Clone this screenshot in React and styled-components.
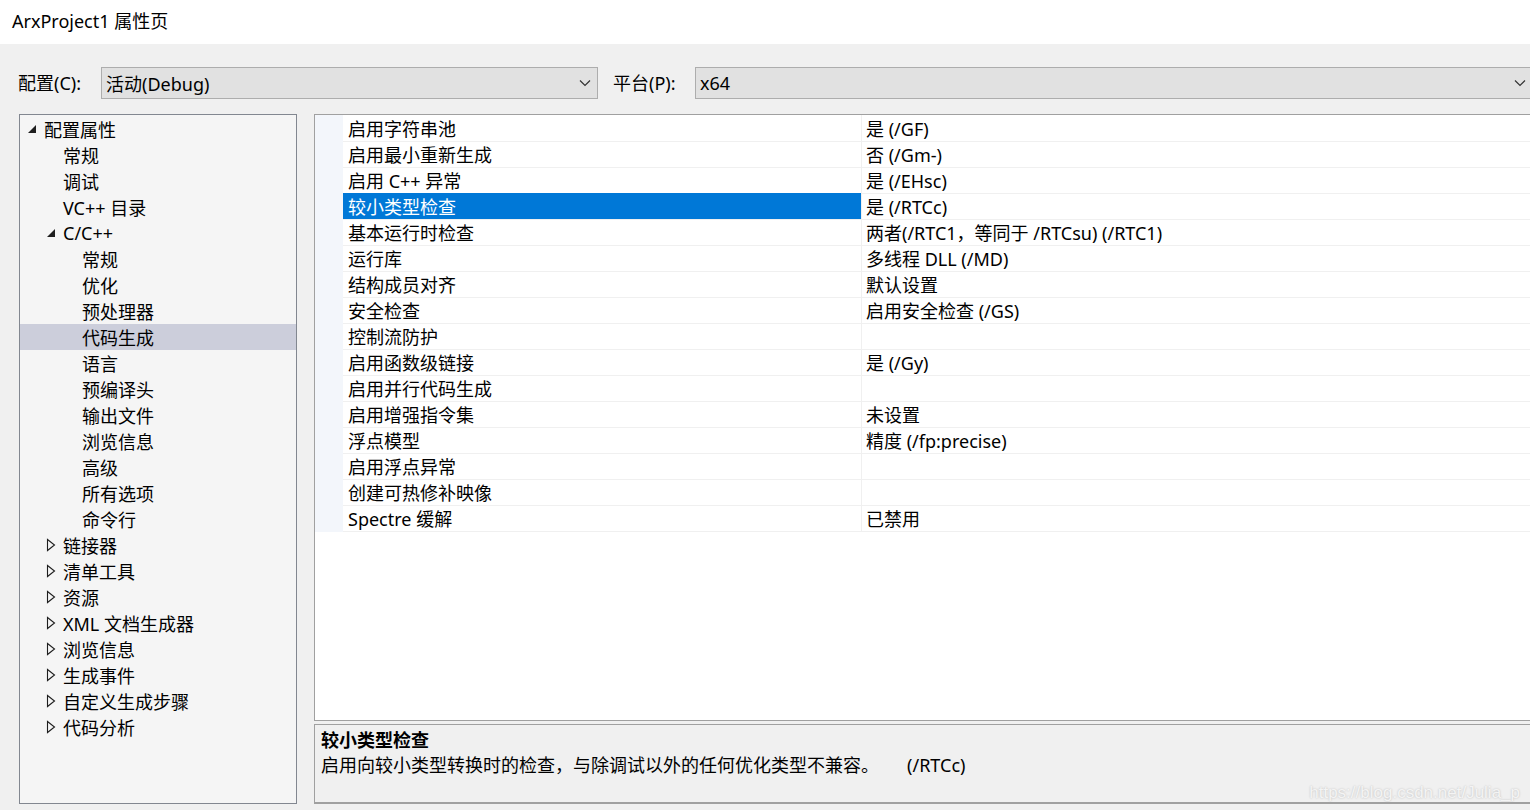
import React from 'react';
import styled, { createGlobalStyle } from 'styled-components';

const Global = createGlobalStyle`
  html, body {
    margin: 0;
    padding: 0;
    width: 1530px;
    height: 810px;
    overflow: hidden;
    background: #f0f0f0;
  }
  body {
    font-family: "Segoe UI", "Noto Sans", "Noto Sans CJK SC", sans-serif;
    font-size: 18px;
    color: #000;
  }
`;

const Window = styled.div`
  width: 1530px;
  height: 810px;
  display: flex;
  flex-direction: column;
  position: relative;
  overflow: hidden;
`;

const TitleBar = styled.div`
  height: 44px;
  background: #fff;
  display: flex;
  align-items: center;
  padding-left: 12px;
  font-size: 18px;
  line-height: 1;
  padding-bottom: 2px;
  box-sizing: border-box;
`;

const Toolbar = styled.div`
  display: flex;
  align-items: center;
  padding: 23px 0 0 18px;
  height: 32px;
`;

const Label = styled.span`
  width: ${p => p.w}px;
  flex: none;
  line-height: 32px;
`;

const Combo = styled.div`
  height: 32px;
  box-sizing: border-box;
  border: 1px solid #adadad;
  background: #e1e1e1;
  display: flex;
  align-items: center;
  padding-left: 4px;
  width: ${p => (p.grow ? 'auto' : `${p.w}px`)};
  flex: ${p => (p.grow ? '1' : 'none')};
  margin-right: ${p => (p.grow ? '-3px' : '15px')};
  span { flex: 1; }
  svg { margin-right: 6px; }
`;

const Main = styled.div`
  flex: 1;
  display: flex;
  gap: 17px;
  padding: 15px 0 6px 19px;
  min-height: 0;
`;

const Tree = styled.div`
  width: 278px;
  flex: none;
  box-sizing: border-box;
  border: 1px solid #828790;
  background: #f5f5f5;
  padding-top: 1px;
`;

const TreeRow = styled.div`
  height: 26px;
  display: flex;
  align-items: center;
  padding-left: ${p => 7 + p.level * 19}px;
  background: ${p => (p.selected ? '#cccedb' : 'transparent')};
  white-space: nowrap;
`;

const Arrow = styled.span`
  width: 17px;
  flex: none;
  display: flex;
  align-items: center;
`;

const Right = styled.div`
  flex: 1;
  display: flex;
  flex-direction: column;
  gap: 3px;
  margin-right: -3px;
  min-width: 0;
`;

const Grid = styled.div`
  flex: 1;
  box-sizing: border-box;
  border: 1px solid #a0a0a0;
  background: #fff;
`;

const GridRow = styled.div`
  display: grid;
  grid-template-columns: 28px 518px 1fr;
  height: 26px;
`;

const Gutter = styled.div`
  background: #f3f6fb;
`;

const Cell = styled.div`
  display: flex;
  align-items: center;
  padding-left: ${p => (p.value ? '4px' : '5px')};
  border-bottom: 1px solid #f0f0f0;
  border-left: ${p => (p.value ? '1px solid #f0f0f0' : 'none')};
  background: ${p => (p.selected ? '#0078d7' : 'transparent')};
  color: ${p => (p.selected ? '#fff' : '#000')};
  white-space: nowrap;
  box-sizing: border-box;
`;

const Desc = styled.div`
  height: 80px;
  box-sizing: border-box;
  border: 1px solid #a0a0a0;
  border-bottom-width: 2px;
  background: #f0f0f0;
  padding: 3px 0 0 6px;
  line-height: 25px;
`;

const DescTitle = styled.div`
  font-weight: bold;
`;

const DescText = styled.div`
  white-space: pre;
`;

const Watermark = styled.div`
  position: absolute;
  right: 10px;
  bottom: 7px;
  font-family: "Liberation Sans", Arial, sans-serif;
  font-size: 17px;
  color: #f4f4f4;
  text-shadow: 0 0 2px #b8b8b8;
`;

const Chevron = () => (
  <svg width="12" height="8" viewBox="0 0 12 8">
    <path d="M1 1.5 L6 6.5 L11 1.5" fill="none" stroke="#333" strokeWidth="1.2" />
  </svg>
);

const Expanded = () => (
  <svg width="10" height="10" viewBox="0 0 10 10">
    <path d="M9 1 L9 9 L1 9 Z" fill="#1e1e1e" />
  </svg>
);

const Collapsed = () => (
  <svg width="10" height="14" viewBox="0 0 10 14">
    <path d="M1.5 1.5 L8.5 7 L1.5 12.5 Z" fill="none" stroke="#1e1e1e" strokeWidth="1.1" />
  </svg>
);

const treeItems = [
  { text: '配置属性', level: 0, arrow: 'open' },
  { text: '常规', level: 1 },
  { text: '调试', level: 1 },
  { text: 'VC++ 目录', level: 1 },
  { text: 'C/C++', level: 1, arrow: 'open' },
  { text: '常规', level: 2 },
  { text: '优化', level: 2 },
  { text: '预处理器', level: 2 },
  { text: '代码生成', level: 2, selected: true },
  { text: '语言', level: 2 },
  { text: '预编译头', level: 2 },
  { text: '输出文件', level: 2 },
  { text: '浏览信息', level: 2 },
  { text: '高级', level: 2 },
  { text: '所有选项', level: 2 },
  { text: '命令行', level: 2 },
  { text: '链接器', level: 1, arrow: 'closed' },
  { text: '清单工具', level: 1, arrow: 'closed' },
  { text: '资源', level: 1, arrow: 'closed' },
  { text: 'XML 文档生成器', level: 1, arrow: 'closed' },
  { text: '浏览信息', level: 1, arrow: 'closed' },
  { text: '生成事件', level: 1, arrow: 'closed' },
  { text: '自定义生成步骤', level: 1, arrow: 'closed' },
  { text: '代码分析', level: 1, arrow: 'closed' },
];

const props = [
  ['启用字符串池', '是 (/GF)'],
  ['启用最小重新生成', '否 (/Gm-)'],
  ['启用 C++ 异常', '是 (/EHsc)'],
  ['较小类型检查', '是 (/RTCc)', true],
  ['基本运行时检查', '两者(/RTC1，等同于 /RTCsu) (/RTC1)'],
  ['运行库', '多线程 DLL (/MD)'],
  ['结构成员对齐', '默认设置'],
  ['安全检查', '启用安全检查 (/GS)'],
  ['控制流防护', ''],
  ['启用函数级链接', '是 (/Gy)'],
  ['启用并行代码生成', ''],
  ['启用增强指令集', '未设置'],
  ['浮点模型', '精度 (/fp:precise)'],
  ['启用浮点异常', ''],
  ['创建可热修补映像', ''],
  ['Spectre 缓解', '已禁用'],
];

export default function App() {
  return (
    <Window>
      <Global />
      <TitleBar>ArxProject1 属性页</TitleBar>
      <Toolbar>
        <Label w={83}>配置(C):</Label>
        <Combo w={497}>
          <span>活动(Debug)</span>
          <Chevron />
        </Combo>
        <Label w={82}>平台(P):</Label>
        <Combo grow>
          <span>x64</span>
          <Chevron />
        </Combo>
      </Toolbar>
      <Main>
        <Tree>
          {treeItems.map((item, i) => (
            <TreeRow key={i} level={item.level} selected={item.selected}>
              <Arrow>
                {item.arrow === 'open' && <Expanded />}
                {item.arrow === 'closed' && <Collapsed />}
              </Arrow>
              {item.text}
            </TreeRow>
          ))}
        </Tree>
        <Right>
          <Grid>
            {props.map(([name, value, sel], i) => (
              <GridRow key={i}>
                <Gutter />
                <Cell selected={sel}>{name}</Cell>
                <Cell value>{value}</Cell>
              </GridRow>
            ))}
          </Grid>
          <Desc>
            <DescTitle>较小类型检查</DescTitle>
            <DescText>{'启用向较小类型转换时的检查，与除调试以外的任何优化类型不兼容。      (/RTCc)'}</DescText>
          </Desc>
        </Right>
      </Main>
      <Watermark>https://blog.csdn.net/Julia_p</Watermark>
    </Window>
  );
}
